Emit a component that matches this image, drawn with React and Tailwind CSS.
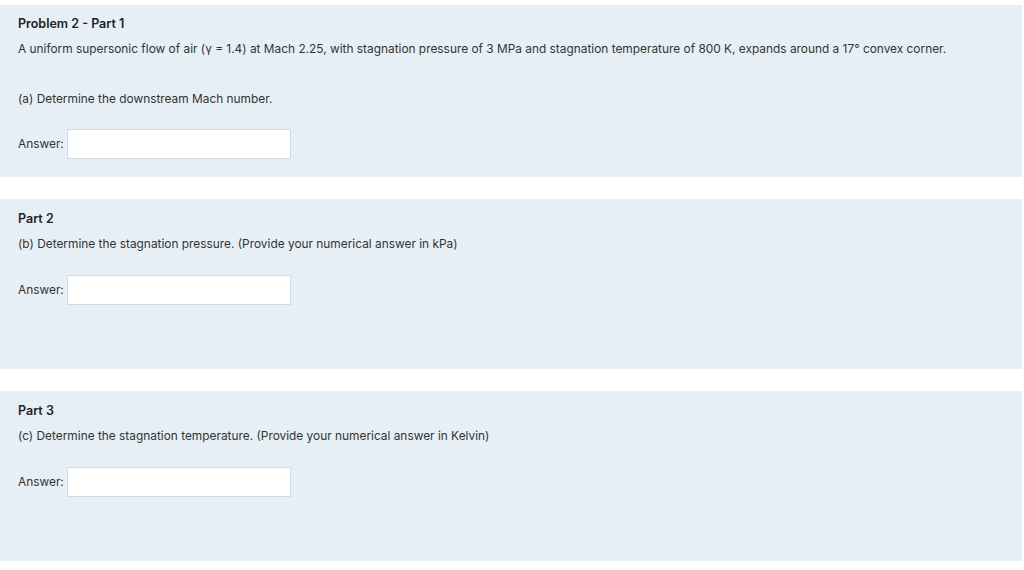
const parts = [
  {
    title: 'Problem 2 - Part 1',
    intro:
      'A uniform supersonic flow of air (γ = 1.4) at Mach 2.25, with stagnation pressure of 3 MPa and stagnation temperature of 800 K, expands around a 17° convex corner.',
    question: '(a) Determine the downstream Mach number.',
  },
  {
    title: 'Part 2',
    question: '(b) Determine the stagnation pressure. (Provide your numerical answer in kPa)',
  },
  {
    title: 'Part 3',
    question: '(c) Determine the stagnation temperature. (Provide your numerical answer in Kelvin)',
  },
];

function AnswerRow() {
  return (
    <div className="flex items-center gap-[3px]">
      <span>Answer:</span>
      <input
        type="text"
        className="w-[224px] h-[30px] bg-white border border-[#d4dadf] outline-none"
      />
    </div>
  );
}

export default function App() {
  return (
    <div
      className="min-h-screen bg-white pt-[5px] text-[11.88px] text-[#333333]"
      style={{ fontFamily: 'Inter, "Noto Sans", sans-serif' }}
    >
      <div className="flex flex-col gap-[22px]">
        {parts.map((p, i) => (
          <section
            key={p.title}
            className={`w-[1022px] bg-[#e7eff6] px-[18px] ${i === 0 ? 'h-[172px] pt-[12px]' : 'h-[170px] pt-[13px]'}`}
          >
            <h2 className="text-[12.5px] font-semibold leading-[14px] text-[#222]">{p.title}</h2>
            {p.intro ? (
              <>
                <p className="mt-[11px] leading-[14px]">{p.intro}</p>
                <p className="mt-[36px] leading-[14px]">{p.question}</p>
                <div className="mt-[23px]">
                  <AnswerRow />
                </div>
              </>
            ) : (
              <>
                <p className="mt-[11px] leading-[14px]">{p.question}</p>
                <div className="mt-[24px]">
                  <AnswerRow />
                </div>
              </>
            )}
          </section>
        ))}
      </div>
    </div>
  );
}
